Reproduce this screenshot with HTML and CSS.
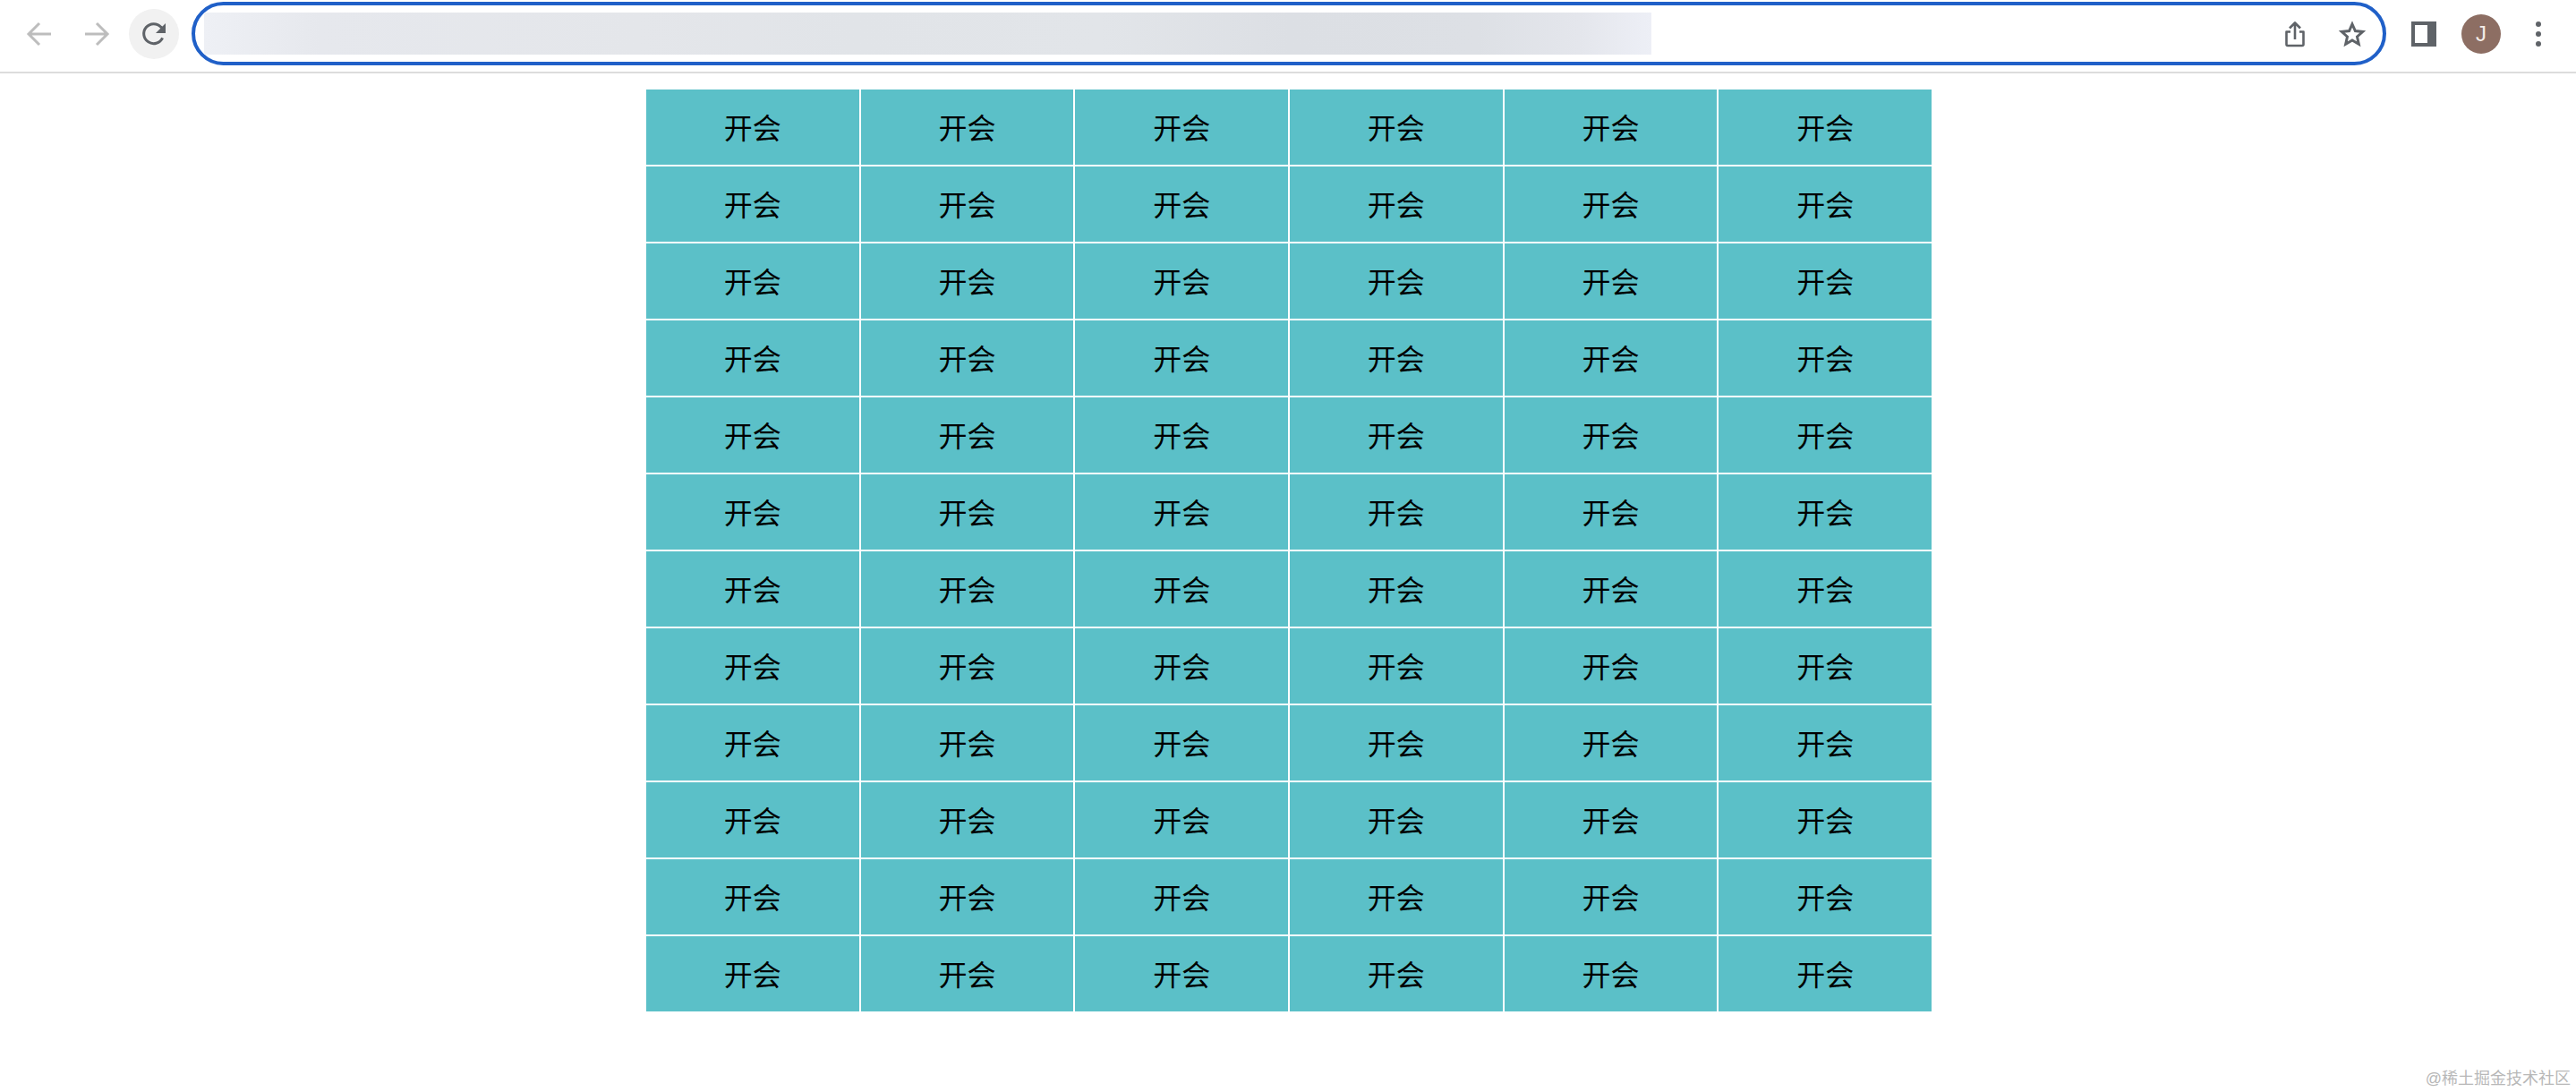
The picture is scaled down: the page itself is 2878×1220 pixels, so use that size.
FILE: index.html
```html
<!DOCTYPE html>
<html lang="zh">
<head>
<meta charset="utf-8">
<title>开会</title>
<link rel="stylesheet" href="styles.css">
</head>
<body>
<header class="toolbar">
  <span class="btn">
    <svg class="icon" viewBox="0 0 28 28"><path class="stroke light" d="M27 14H2M14 2 2 14l12 12"/></svg>
  </span>
  <span class="btn">
    <svg class="icon" viewBox="0 0 28 28"><path class="stroke light" d="M1 14h25M14 2l12 12-12 12"/></svg>
  </span>
  <span class="btn btn-active">
    <svg class="icon" viewBox="0 0 28 28"><path class="stroke dark" d="M23.6 18.4A11 11 0 1 1 21.8 6.2L25 9"/><path class="fill-dark" d="M27 2v11H16z"/></svg>
  </span>
  <div class="address">
    <div class="url-blur"></div>
    <span class="btn">
      <svg class="icon" viewBox="0 0 28 28"><path class="stroke dark thin" d="M9 11.5H4.5v14a1.5 1.5 0 0 0 1.5 1.5h16a1.5 1.5 0 0 0 1.5-1.5v-14H19M14 20V2M8 7.5 14 1.5l6 6"/></svg>
    </span>
    <span class="btn">
      <svg class="icon" viewBox="0 0 28 28"><path class="stroke dark" d="m14 3 3.4 7.6 8.3.9-6.2 5.5 1.8 8.2L14 20.9l-7.3 4.3 1.8-8.2-6.2-5.5 8.3-.9z"/></svg>
    </span>
  </div>
  <span class="btn">
    <svg class="icon" viewBox="0 0 28 28"><path class="fill-dark" d="M0 0h28v28H0z"/><path class="fill-white" d="M4 4h14v20H4z"/></svg>
  </span>
  <span class="btn"><span class="avatar">J</span></span>
  <span class="btn">
    <svg class="icon" viewBox="0 0 28 28"><circle class="fill-dark" cx="14" cy="3" r="3"/><circle class="fill-dark" cx="14" cy="14" r="3"/><circle class="fill-dark" cx="14" cy="25" r="3"/></svg>
  </span>
</header>
<main class="page">
  <div class="schedule">
    <div class="cell">开会</div><div class="cell">开会</div><div class="cell">开会</div><div class="cell">开会</div><div class="cell">开会</div><div class="cell">开会</div>
    <div class="cell">开会</div><div class="cell">开会</div><div class="cell">开会</div><div class="cell">开会</div><div class="cell">开会</div><div class="cell">开会</div>
    <div class="cell">开会</div><div class="cell">开会</div><div class="cell">开会</div><div class="cell">开会</div><div class="cell">开会</div><div class="cell">开会</div>
    <div class="cell">开会</div><div class="cell">开会</div><div class="cell">开会</div><div class="cell">开会</div><div class="cell">开会</div><div class="cell">开会</div>
    <div class="cell">开会</div><div class="cell">开会</div><div class="cell">开会</div><div class="cell">开会</div><div class="cell">开会</div><div class="cell">开会</div>
    <div class="cell">开会</div><div class="cell">开会</div><div class="cell">开会</div><div class="cell">开会</div><div class="cell">开会</div><div class="cell">开会</div>
    <div class="cell">开会</div><div class="cell">开会</div><div class="cell">开会</div><div class="cell">开会</div><div class="cell">开会</div><div class="cell">开会</div>
    <div class="cell">开会</div><div class="cell">开会</div><div class="cell">开会</div><div class="cell">开会</div><div class="cell">开会</div><div class="cell">开会</div>
    <div class="cell">开会</div><div class="cell">开会</div><div class="cell">开会</div><div class="cell">开会</div><div class="cell">开会</div><div class="cell">开会</div>
    <div class="cell">开会</div><div class="cell">开会</div><div class="cell">开会</div><div class="cell">开会</div><div class="cell">开会</div><div class="cell">开会</div>
    <div class="cell">开会</div><div class="cell">开会</div><div class="cell">开会</div><div class="cell">开会</div><div class="cell">开会</div><div class="cell">开会</div>
    <div class="cell">开会</div><div class="cell">开会</div><div class="cell">开会</div><div class="cell">开会</div><div class="cell">开会</div><div class="cell">开会</div>
  </div>
</main>
<div class="watermark">@稀土掘金技术社区</div>
</body>
</html>
```
FILE: styles.css
```css
html, body {
  margin: 0;
  padding: 0;
  height: 100%;
  background: #fff;
  overflow: hidden;
}
body {
  position: relative;
  font-family: "Liberation Sans", "Noto Sans CJK SC", sans-serif;
}
.toolbar {
  display: flex;
  align-items: center;
  gap: 8px;
  box-sizing: border-box;
  height: 82px;
  padding: 2px 14px 7px 16px;
  border-bottom: 2px solid #dcdcdc;
}
.btn {
  flex: none;
  display: flex;
  align-items: center;
  justify-content: center;
  width: 56px;
  height: 56px;
  border-radius: 50%;
}
.btn-active {
  background: #f1f1f1;
}
.icon {
  width: 28px;
  height: 28px;
  overflow: visible;
}
.stroke {
  fill: none;
  stroke-width: 3;
  stroke-linejoin: miter;
}
.light { stroke: #bdbdbd; }
.dark { stroke: #5f6368; }
.thin { stroke-width: 2.6; stroke-linejoin: round; }
.fill-dark { fill: #5f6368; }
.fill-white { fill: #fff; }
.address {
  flex: 1;
  display: flex;
  align-items: center;
  gap: 8px;
  box-sizing: border-box;
  height: 71px;
  margin: 0 6px;
  padding: 0 6px 0 10px;
  border: 4px solid #2060c8;
  border-radius: 36px;
}
.url-blur {
  width: 1617px;
  height: 47px;
  margin-right: auto;
  background: linear-gradient(90deg, #eef0f5 0, #e6e8ed 8%, #e4e6ea 30%, #e1e4e8 45%, #e2e5e9 62%, #dcdfe4 75%, #dde0e5 88%, #e4e6ec 95%, #edeff6 100%);
}
.avatar {
  display: flex;
  align-items: center;
  justify-content: center;
  width: 44px;
  height: 44px;
  border-radius: 50%;
  background: #8d6e63;
  color: #f3ece8;
  font-size: 24px;
}
.page {
  display: flex;
  justify-content: center;
  padding-top: 18px;
}
.schedule {
  display: grid;
  grid-template-columns: repeat(6, 1fr);
  grid-auto-rows: 84px;
  gap: 2px;
  width: 1436px;
  margin-left: 2px;
}
.cell {
  display: flex;
  align-items: center;
  justify-content: center;
  box-sizing: border-box;
  padding-bottom: 2px;
  background: #5bc0c8;
  color: #000;
  font-size: 32px;
}
.watermark {
  position: absolute;
  right: 6px;
  bottom: 3px;
  color: #b8b8b8;
  font-size: 18px;
  line-height: 24px;
}
```
